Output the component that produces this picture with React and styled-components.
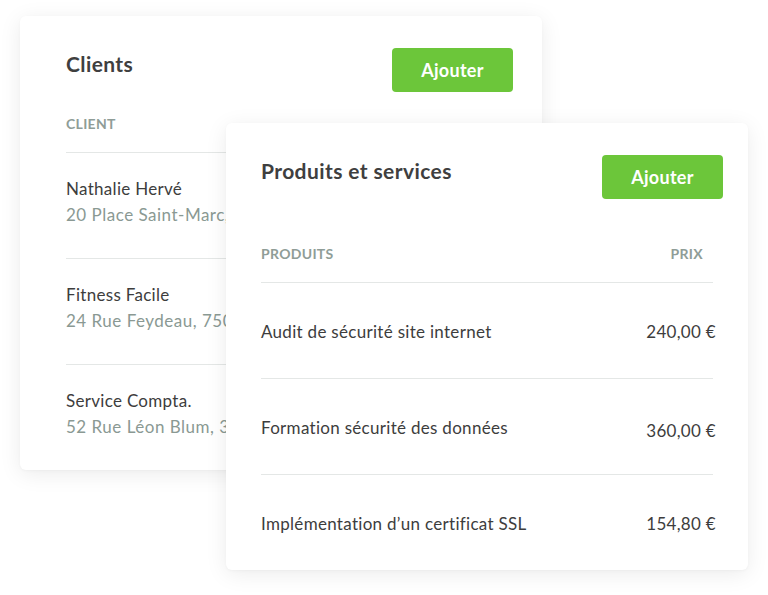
import React from "react";
import styled, { createGlobalStyle } from "styled-components";

const GlobalStyle = createGlobalStyle`
  html, body {
    margin: 0;
    padding: 0;
    background: #ffffff;
  }
  body {
    font-family: Lato, "Open Sans", "Liberation Sans", sans-serif;
    color: #3d3d3d;
    -webkit-font-smoothing: antialiased;
  }
`;

const clients = [
  { name: "Nathalie Hervé", address: "20 Place Saint-Marc, 75002 Paris" },
  { name: "Fitness Facile", address: "24 Rue Feydeau, 75002 Paris" },
  { name: "Service Compta.", address: "52 Rue Léon Blum, 33000 Bordeaux" }
];

const products = [
  { label: "Audit de sécurité site internet", price: "240,00 €" },
  { label: "Formation sécurité des données", price: "360,00 €" },
  { label: "Implémentation d’un certificat SSL", price: "154,80 €" }
];

const Styled = {
  Stage: styled.div`
    position: relative;
    width: 768px;
    height: 595px;
    overflow: hidden;
    padding: 16px 0 0 20px;
    box-sizing: border-box;
  `,
  Card: styled.section`
    box-sizing: border-box;
    width: 522px;
    background: #ffffff;
    border-radius: 6px;
    box-shadow: 0 4px 22px rgba(0, 0, 0, 0.08), 0 1px 3px rgba(0, 0, 0, 0.03);
    padding: 32px ${p => p.$padRight}px 0 ${p => p.$padLeft}px;
    overflow: hidden;
  `,
  // the products card sits on top of the clients card
  Floating: styled.div`
    position: absolute;
    left: 226px;
    top: 123px;
  `,
  Header: styled.header`
    display: flex;
    justify-content: space-between;
    align-items: flex-start;
    margin-bottom: ${p => p.$gap}px;
  `,
  Title: styled.h2`
    margin: 3px 0 0;
    font-size: 21px;
    line-height: 25px;
    font-weight: 700;
    letter-spacing: 0.4px;
    color: #3f3f3f;
  `,
  Button: styled.button`
    width: 121px;
    height: 44px;
    border: none;
    border-radius: 4px;
    background: #6cc63a;
    color: #ffffff;
    font-family: inherit;
    font-size: 18px;
    font-weight: 700;
    letter-spacing: 0.3px;
    cursor: pointer;
  `,
  Table: styled.div`
    margin-right: ${p => p.$inset}px;
  `,
  Head: styled.div`
    display: flex;
    justify-content: space-between;
    padding-bottom: 20px;
    border-bottom: 1px solid #e4e7e6;
  `,
  HeadLabel: styled.span`
    font-size: 14px;
    line-height: 17px;
    font-weight: 700;
    letter-spacing: 0.3px;
    text-transform: uppercase;
    color: #8f9d97;
    padding-right: ${p => p.$pad || 0}px;
  `,
  ClientRow: styled.div`
    display: flex;
    flex-direction: column;
    padding: 23px 0 30px;
    border-bottom: 1px solid #e4e7e6;
    &:last-child {
      border-bottom: none;
    }
  `,
  Name: styled.span`
    font-size: 17px;
    line-height: 26px;
    letter-spacing: 0.3px;
    color: #3d3d3d;
    white-space: nowrap;
  `,
  Address: styled.span`
    font-size: 17px;
    line-height: 26px;
    letter-spacing: 0.5px;
    color: #8a9993;
    white-space: nowrap;
  `,
  ProductRow: styled.div`
    display: flex;
    justify-content: space-between;
    align-items: center;
    padding: 36px 0 33px;
    border-bottom: 1px solid #e4e7e6;
    &:last-child {
      border-bottom: none;
    }
  `,
  Label: styled.span`
    font-size: 17px;
    line-height: 26px;
    letter-spacing: 0.3px;
    color: #3d3d3d;
  `,
  Price: styled.span`
    font-size: 17px;
    line-height: 26px;
    letter-spacing: 0.3px;
    color: #3d3d3d;
    margin-right: -3px;
    position: relative;
    top: ${p => p.$nudge || 0}px;
  `
};

export default function App() {
  return (
    <>
      <GlobalStyle />
      <Styled.Stage>
        <Styled.Card $padLeft={46} $padRight={29}>
          <Styled.Header $gap={23}>
            <Styled.Title>Clients</Styled.Title>
            <Styled.Button>Ajouter</Styled.Button>
          </Styled.Header>
          <Styled.Table $inset={0}>
            <Styled.Head>
              <Styled.HeadLabel>Client</Styled.HeadLabel>
            </Styled.Head>
            {clients.map(c => (
              <Styled.ClientRow key={c.name}>
                <Styled.Name>{c.name}</Styled.Name>
                <Styled.Address>{c.address}</Styled.Address>
              </Styled.ClientRow>
            ))}
          </Styled.Table>
        </Styled.Card>

        <Styled.Floating>
          <Styled.Card $padLeft={35} $padRight={25}>
            <Styled.Header $gap={46}>
              <Styled.Title>Produits et services</Styled.Title>
              <Styled.Button>Ajouter</Styled.Button>
            </Styled.Header>
            <Styled.Table $inset={10}>
              <Styled.Head>
                <Styled.HeadLabel>Produits</Styled.HeadLabel>
                <Styled.HeadLabel $pad={10}>Prix</Styled.HeadLabel>
              </Styled.Head>
              {products.map((p, i) => (
                <Styled.ProductRow key={p.label}>
                  <Styled.Label>{p.label}</Styled.Label>
                  <Styled.Price $nudge={i === 1 ? 3 : 0}>{p.price}</Styled.Price>
                </Styled.ProductRow>
              ))}
            </Styled.Table>
          </Styled.Card>
        </Styled.Floating>
      </Styled.Stage>
    </>
  );
}
